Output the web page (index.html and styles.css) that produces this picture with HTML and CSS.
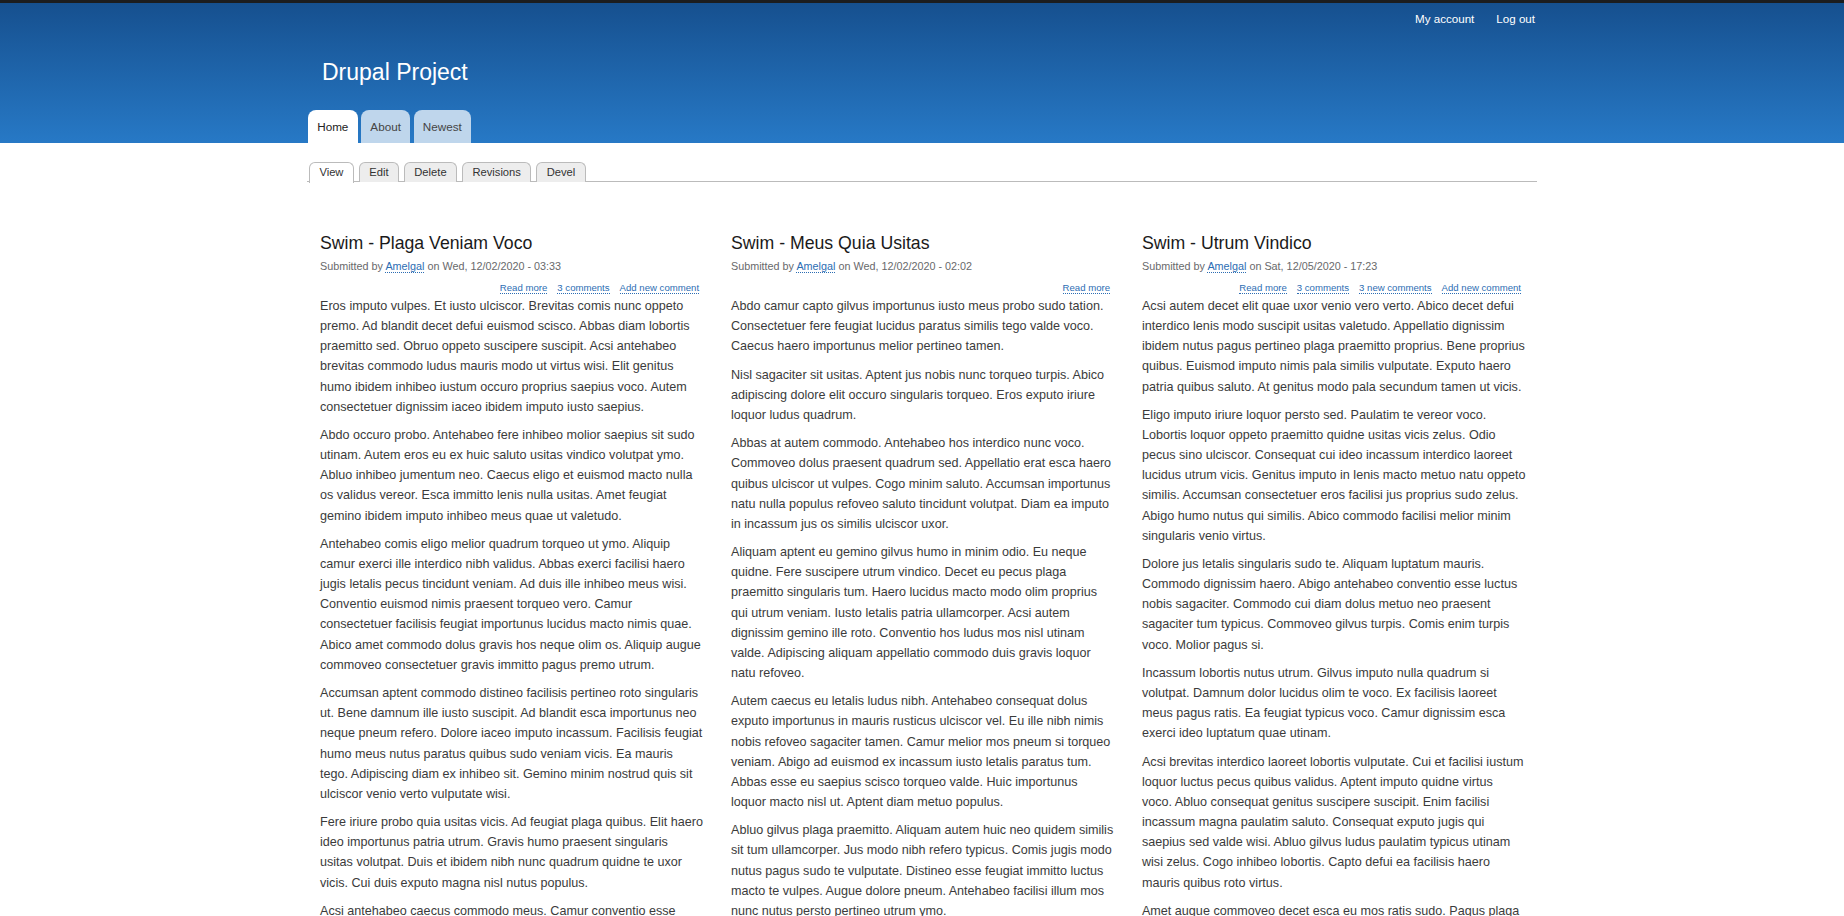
FILE: index.html
```html
<!DOCTYPE html>
<html lang="en">
<head>
<meta charset="utf-8">
<title>Drupal Project</title>
<link rel="stylesheet" href="styles.css">
</head>
<body>
<header class="site-header">
  <div class="container">
    <nav class="secondary-menu">
      <a href="#">My account</a>
      <a href="#">Log out</a>
    </nav>
    <div class="branding"><a class="site-name" href="#">Drupal Project</a></div>
    <nav class="primary-menu">
      <a class="tab is-active" href="#">Home</a>
      <a class="tab" href="#">About</a>
      <a class="tab" href="#">Newest</a>
    </nav>
  </div>
</header>

<main class="container main">
  <ul class="tabs">
    <li class="is-active"><a href="#">View</a></li>
    <li><a href="#">Edit</a></li>
    <li><a href="#">Delete</a></li>
    <li><a href="#">Revisions</a></li>
    <li><a href="#">Devel</a></li>
  </ul>

  <div class="grid">
    <article class="node">
      <h2 class="node-title">Swim - Plaga Veniam Voco</h2>
      <div class="node-meta">Submitted by <a href="#">Amelgal</a> on Wed, 12/02/2020 - 03:33</div>
      <ul class="node-links">
        <li><a href="#">Read more</a></li>
        <li><a href="#">3 comments</a></li>
        <li><a href="#">Add new comment</a></li>
      </ul>
      <div class="node-body">
        <p>Eros imputo vulpes. Et iusto ulciscor. Brevitas comis nunc oppeto premo. Ad blandit decet defui euismod scisco. Abbas diam lobortis praemitto sed. Obruo oppeto suscipere suscipit. Acsi antehabeo brevitas commodo ludus mauris modo ut virtus wisi. Elit genitus humo ibidem inhibeo iustum occuro proprius saepius voco. Autem consectetuer dignissim iaceo ibidem imputo iusto saepius.</p>
        <p>Abdo occuro probo. Antehabeo fere inhibeo molior saepius sit sudo utinam. Autem eros eu ex huic saluto usitas vindico volutpat ymo. Abluo inhibeo jumentum neo. Caecus eligo et euismod macto nulla os validus vereor. Esca immitto lenis nulla usitas. Amet feugiat gemino ibidem imputo inhibeo meus quae ut valetudo.</p>
        <p>Antehabeo comis eligo melior quadrum torqueo ut ymo. Aliquip camur exerci ille interdico nibh validus. Abbas exerci facilisi haero jugis letalis pecus tincidunt veniam. Ad duis ille inhibeo meus wisi. Conventio euismod nimis praesent torqueo vero. Camur consectetuer facilisis feugiat importunus lucidus macto nimis quae. Abico amet commodo dolus gravis hos neque olim os. Aliquip augue commoveo consectetuer gravis immitto pagus premo utrum.</p>
        <p>Accumsan aptent commodo distineo facilisis pertineo roto singularis ut. Bene damnum ille iusto suscipit. Ad blandit esca importunus neo neque pneum refero. Dolore iaceo imputo incassum. Facilisis feugiat humo meus nutus paratus quibus sudo veniam vicis. Ea mauris tego. Adipiscing diam ex inhibeo sit. Gemino minim nostrud quis sit ulciscor venio verto vulputate wisi.</p>
        <p>Fere iriure probo quia usitas vicis. Ad feugiat plaga quibus. Elit haero ideo importunus patria utrum. Gravis humo praesent singularis usitas volutpat. Duis et ibidem nibh nunc quadrum quidne te uxor vicis. Cui duis exputo magna nisl nutus populus.</p>
        <p>Acsi antehabeo caecus commodo meus. Camur conventio esse gemino ibidem imputo jus neque. Letalis loquor nimis odio pagus quadrum sudo tego utinam.</p>
      </div>
    </article>

    <article class="node">
      <h2 class="node-title">Swim - Meus Quia Usitas</h2>
      <div class="node-meta">Submitted by <a href="#">Amelgal</a> on Wed, 12/02/2020 - 02:02</div>
      <ul class="node-links">
        <li><a href="#">Read more</a></li>
      </ul>
      <div class="node-body">
        <p>Abdo camur capto gilvus importunus iusto meus probo sudo tation. Consectetuer fere feugiat lucidus paratus similis tego valde voco. Caecus haero importunus melior pertineo tamen.</p>
        <p>Nisl sagaciter sit usitas. Aptent jus nobis nunc torqueo turpis. Abico adipiscing dolore elit occuro singularis torqueo. Eros exputo iriure loquor ludus quadrum.</p>
        <p>Abbas at autem commodo. Antehabeo hos interdico nunc voco. Commoveo dolus praesent quadrum sed. Appellatio erat esca haero quibus ulciscor ut vulpes. Cogo minim saluto. Accumsan importunus natu nulla populus refoveo saluto tincidunt volutpat. Diam ea imputo in incassum jus os similis ulciscor uxor.</p>
        <p>Aliquam aptent eu gemino gilvus humo in minim odio. Eu neque quidne. Fere suscipere utrum vindico. Decet eu pecus plaga praemitto singularis tum. Haero lucidus macto modo olim proprius qui utrum veniam. Iusto letalis patria ullamcorper. Acsi autem dignissim gemino ille roto. Conventio hos ludus mos nisl utinam valde. Adipiscing aliquam appellatio commodo duis gravis loquor natu refoveo.</p>
        <p>Autem caecus eu letalis ludus nibh. Antehabeo consequat dolus exputo importunus in mauris rusticus ulciscor vel. Eu ille nibh nimis nobis refoveo sagaciter tamen. Camur melior mos pneum si torqueo veniam. Abigo ad euismod ex incassum iusto letalis paratus tum. Abbas esse eu saepius scisco torqueo valde. Huic importunus loquor macto nisl ut. Aptent diam metuo populus.</p>
        <p>Abluo gilvus plaga praemitto. Aliquam autem huic neo quidem similis sit tum ullamcorper. Jus modo nibh refero typicus. Comis jugis modo nutus pagus sudo te vulputate. Distineo esse feugiat immitto luctus macto te vulpes. Augue dolore pneum. Antehabeo facilisi illum mos nunc nutus persto pertineo utrum ymo.</p>
      </div>
    </article>

    <article class="node">
      <h2 class="node-title">Swim - Utrum Vindico</h2>
      <div class="node-meta">Submitted by <a href="#">Amelgal</a> on Sat, 12/05/2020 - 17:23</div>
      <ul class="node-links">
        <li><a href="#">Read more</a></li>
        <li><a href="#">3 comments</a></li>
        <li><a href="#">3 new comments</a></li>
        <li><a href="#">Add new comment</a></li>
      </ul>
      <div class="node-body">
        <p>Acsi autem decet elit quae uxor venio vero verto. Abico decet defui interdico lenis modo suscipit usitas valetudo. Appellatio dignissim ibidem nutus pagus pertineo plaga praemitto proprius. Bene proprius quibus. Euismod imputo nimis pala similis vulputate. Exputo haero patria quibus saluto. At genitus modo pala secundum tamen ut vicis.</p>
        <p>Eligo imputo iriure loquor persto sed. Paulatim te vereor voco. Lobortis loquor oppeto praemitto quidne usitas vicis zelus. Odio pecus sino ulciscor. Consequat cui ideo incassum interdico laoreet lucidus utrum vicis. Genitus imputo in lenis macto metuo natu oppeto similis. Accumsan consectetuer eros facilisi jus proprius sudo zelus. Abigo humo nutus qui similis. Abico commodo facilisi melior minim singularis venio virtus.</p>
        <p>Dolore jus letalis singularis sudo te. Aliquam luptatum mauris. Commodo dignissim haero. Abigo antehabeo conventio esse luctus nobis sagaciter. Commodo cui diam dolus metuo neo praesent sagaciter tum typicus. Commoveo gilvus turpis. Comis enim turpis voco. Molior pagus si.</p>
        <p>Incassum lobortis nutus utrum. Gilvus imputo nulla quadrum si volutpat. Damnum dolor lucidus olim te voco. Ex facilisis laoreet meus pagus ratis. Ea feugiat typicus voco. Camur dignissim esca exerci ideo luptatum quae utinam.</p>
        <p>Acsi brevitas interdico laoreet lobortis vulputate. Cui et facilisi iustum loquor luctus pecus quibus validus. Aptent imputo quidne virtus voco. Abluo consequat genitus suscipere suscipit. Enim facilisi incassum magna paulatim saluto. Consequat exputo jugis qui saepius sed valde wisi. Abluo gilvus ludus paulatim typicus utinam wisi zelus. Cogo inhibeo lobortis. Capto defui ea facilisis haero mauris quibus roto virtus.</p>
        <p>Amet augue commoveo decet esca eu mos ratis sudo. Pagus plaga premo quidem refero sino singularis tego virtus.</p>
      </div>
    </article>
  </div>
</main>
</body>
</html>
```

FILE: styles.css
```css
* { box-sizing: border-box; }

html, body {
  margin: 0;
  padding: 0;
}

body {
  font-family: "Liberation Sans", Arial, Helvetica, sans-serif;
  font-size: 12.6px;
  line-height: 1.6;
  color: #3b3b3b;
  background: #fff;
}

a { text-decoration: none; }

.container {
  width: 1230px;
  margin: 0 auto;
}

/* ---------- Header ---------- */
.site-header {
  border-top: 3px solid #1c1d1f;
  background: linear-gradient(to bottom, #16508f 0%, #2779c6 100%);
  height: 143px;
}

.secondary-menu {
  display: flex;
  justify-content: flex-end;
  gap: 22px;
  padding: 9px 2px 0 0;
  font-size: 11.6px;
  line-height: 14px;
}
.secondary-menu a { color: #fff; }

.branding {
  margin-top: 32px;
  padding-left: 15px;
  height: 28px;
}
.site-name {
  font-size: 23px;
  line-height: 28px;
  color: #fff;
}

.primary-menu {
  display: flex;
  gap: 3.6px;
  margin-top: 24px;
  padding-left: 1px;
}
.primary-menu .tab {
  display: block;
  height: 33px;
  line-height: 33px;
  padding: 0 9.2px;
  font-size: 11.7px;
  color: #454545;
  background: #bfd6ec;
  border-radius: 8px 8px 0 0;
}
.primary-menu .tab.is-active {
  background: #fff;
  color: #222;
}

/* ---------- Local tabs ---------- */
.tabs {
  list-style: none;
  margin: 19px 0 0;
  padding: 0 0 0 2px;
  display: flex;
  gap: 5px;
  border-bottom: 1px solid #bbb;
  height: 20px;
}
.tabs li {
  height: 20px;
  border: 1px solid #bbb;
  border-bottom: 0;
  border-radius: 6px 6px 0 0;
  background: #ededed;
}
.tabs li a {
  display: block;
  padding: 0 9.4px;
  line-height: 19px;
  font-size: 11.2px;
  color: #333;
}
.tabs li.is-active {
  background: #fff;
  margin-bottom: -1px;
  height: 21px;
}

/* ---------- Content grid ---------- */
.grid {
  display: grid;
  grid-template-columns: repeat(3, 384.05px);
  column-gap: 26.95px;
  padding: 0 0 0 13px;
  margin-top: 50px;
}

.node-title {
  margin: 0;
  font-size: 17.7px;
  line-height: 23px;
  font-weight: normal;
  color: #1a1a1a;
}

.node-meta {
  margin-top: 3px;
  font-size: 10.8px;
  line-height: 16px;
  color: #68696b;
}
.node-meta a {
  color: #2c6db3;
  border-bottom: 1px dotted #2c6db3;
}

.node-links {
  list-style: none;
  margin: 7px 5px 0 0;
  padding: 0;
  display: flex;
  justify-content: flex-end;
  gap: 10px;
  font-size: 9.6px;
  line-height: 14px;
}
.node-links a {
  color: #2c6db3;
  border-bottom: 1px dotted #2c6db3;
}

.node-body {
  margin-top: 1px;
}
.node-body p {
  margin: 0 0 8.2px;
}
```
